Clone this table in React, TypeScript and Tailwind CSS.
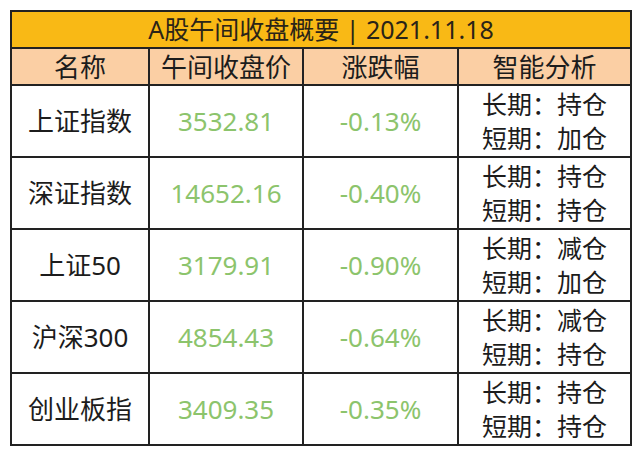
const rows = [
  { name: "上证指数", price: "3532.81", change: "-0.13%", long: "持仓", short: "加仓" },
  { name: "深证指数", price: "14652.16", change: "-0.40%", long: "持仓", short: "持仓" },
  { name: "上证50", price: "3179.91", change: "-0.90%", long: "减仓", short: "加仓" },
  { name: "沪深300", price: "4854.43", change: "-0.64%", long: "减仓", short: "持仓" },
  { name: "创业板指", price: "3409.35", change: "-0.35%", long: "持仓", short: "持仓" },
];

const font = { fontFamily: '"Noto Sans", "Noto Sans CJK SC", sans-serif' };

export default function App() {
  return (
    <div className="w-[640px] h-[455px] bg-white pt-[10px] pl-[10px]" style={font}>
      <table className="w-[620px] border-collapse text-[#1c1c1c] table-fixed">
        <colgroup>
          <col className="w-[138px]" />
          <col className="w-[154px]" />
          <col className="w-[155px]" />
          <col className="w-[173px]" />
        </colgroup>
        <thead>
          <tr className="h-[37px] bg-[#f9b915]">
            <th colSpan={4} className="border-2 border-[#222] font-normal text-[25px] leading-none text-[#2a2418]">
              A股午间收盘概要 | 2021.11.18
            </th>
          </tr>
          <tr className="h-[37px] bg-[#fbcfa4]">
            <th className="border-2 border-[#222] font-normal text-[26px] leading-none">名称</th>
            <th className="border-2 border-[#222] font-normal text-[26px] leading-none">午间收盘价</th>
            <th className="border-2 border-[#222] font-normal text-[26px] leading-none">涨跌幅</th>
            <th className="border-2 border-[#222] font-normal text-[26px] leading-none">智能分析</th>
          </tr>
        </thead>
        <tbody>
          {rows.map((r) => (
            <tr key={r.name} className="h-[72px]">
              <td className="border-2 border-[#222] text-center text-[26px] leading-none">{r.name}</td>
              <td className="border-2 border-[#222] text-center text-[26px] leading-none text-[#8cc46c]">{r.price}</td>
              <td className="border-2 border-[#222] text-center text-[26px] leading-none text-[#8cc46c]">{r.change}</td>
              <td className="border-2 border-[#222] text-center text-[25px] leading-[34px]">
                <div>长期：{r.long}</div>
                <div>短期：{r.short}</div>
              </td>
            </tr>
          ))}
        </tbody>
      </table>
    </div>
  );
}
